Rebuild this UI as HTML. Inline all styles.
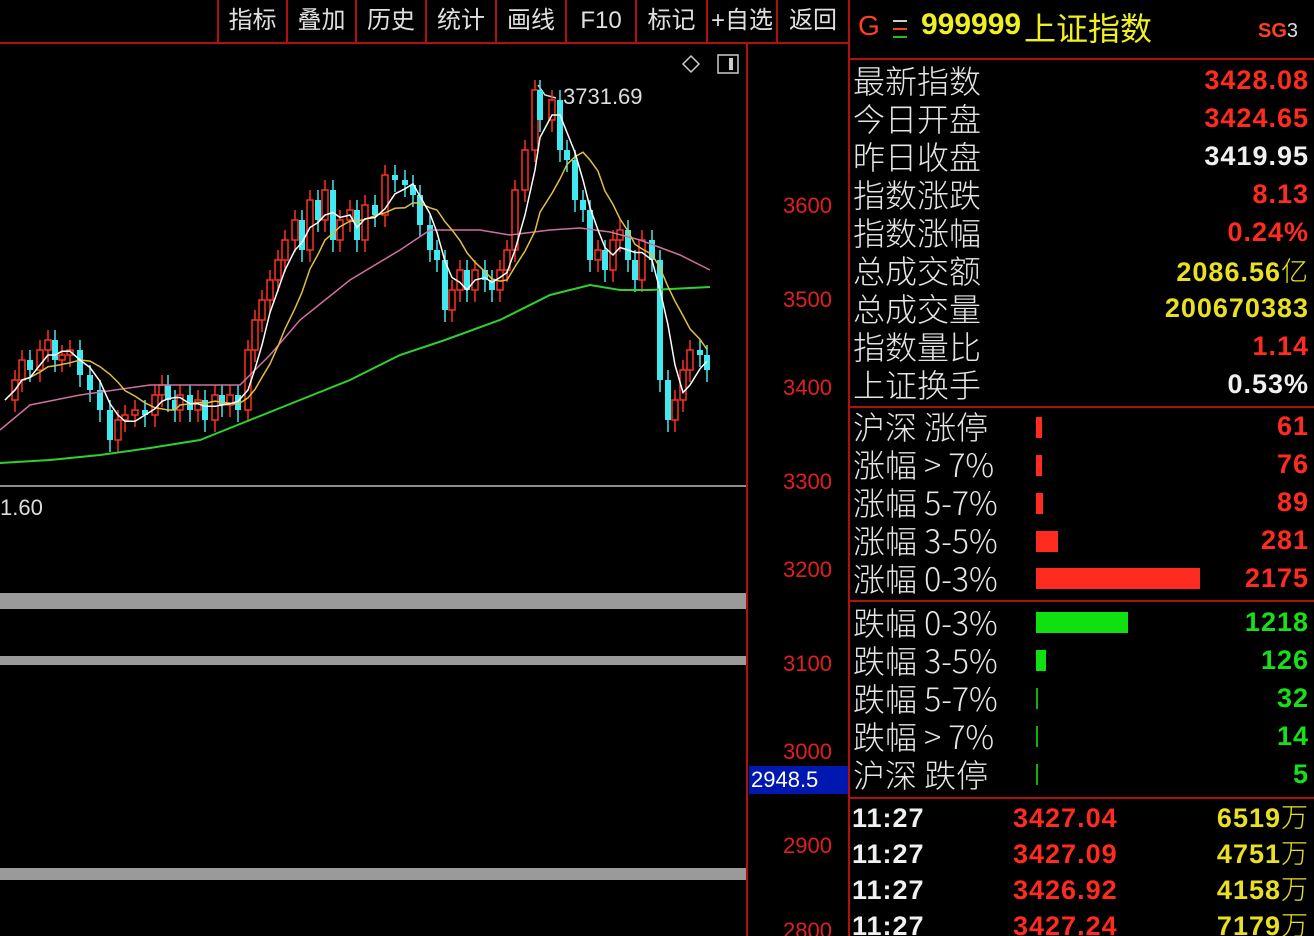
<!DOCTYPE html>
<html style="overflow:hidden;height:936px"><head><meta charset="utf-8"><style>
html,body{margin:0;}
body{width:1314px;height:936px;background:#000;overflow:hidden;position:relative;font-family:"Liberation Sans","Noto Sans CJK SC",sans-serif;}
.a{position:absolute;white-space:nowrap;}
.tb{position:absolute;top:0;height:42px;line-height:42px;text-align:center;color:#e0e0e0;font-size:24px;border-left:2px solid #b01010;}
.lab{position:absolute;left:853px;color:#e6e6e6;font-size:32px;line-height:38px;height:38px;font-family:"Noto Sans CJK SC",sans-serif;font-weight:300;}
.val{position:absolute;right:5px;font-size:27px;font-weight:bold;line-height:38px;height:38px;letter-spacing:1px;}
.ax{position:absolute;left:783px;color:#e02020;font-size:22px;}
.tr{position:absolute;font-size:27px;font-weight:bold;line-height:32px;height:32px;letter-spacing:1px;}
.r{color:#ff2a20}.g{color:#18e018}.y{color:#e8e020}.w{color:#f0f0f0}
</style></head><body>
<div class="tb" style="left:217px;width:67px">指标</div>
<div class="tb" style="left:286px;width:67px">叠加</div>
<div class="tb" style="left:355px;width:68px">历史</div>
<div class="tb" style="left:425px;width:68px">统计</div>
<div class="tb" style="left:495px;width:68px">画线</div>
<div class="tb" style="left:565px;width:68px">F10</div>
<div class="tb" style="left:635px;width:69px">标记</div>
<div class="tb" style="left:706px;width:68px">+自选</div>
<div class="tb" style="left:776px;width:70px">返回</div>
<div class="a" style="left:0;top:42px;width:850px;height:2px;background:#b01010"></div>
<div class="a" style="left:746px;top:42px;width:2px;height:894px;background:#b01010"></div>
<div class="a" style="left:848px;top:0;width:2px;height:936px;background:#b01010"></div>
<svg class="a" style="left:0;top:0" width="746" height="936" id="ch">
<path d="M691 56 l8 8 l-8 8 l-8 -8z" fill="none" stroke="#ccc" stroke-width="1.5"/>
<rect x="718" y="55" width="20" height="18" fill="none" stroke="#ccc" stroke-width="1.5"/><rect x="729" y="58" width="4" height="12" fill="#ccc"/>
<line x1="0" y1="486" x2="746" y2="486" stroke="#bbb" stroke-width="1.5"/>
<rect x="0" y="593" width="746" height="16" fill="#9a9a9a"/>
<rect x="0" y="656" width="746" height="9" fill="#9a9a9a"/>
<rect x="0" y="868" width="746" height="12" fill="#9a9a9a"/>
<polyline points="538,85 545,95 556,98" fill="none" stroke="#ddd" stroke-width="1.5"/>
<text x="563" y="104" fill="#ddd" font-size="22" font-family="Liberation Sans">3731.69</text>
<text x="0" y="515" fill="#ddd" font-size="22" font-family="Liberation Sans">1.60</text>
<g id="cd"></g>
<polyline fill="none" stroke="#d070a0" stroke-width="1.5" points="0,430 30,405 80,395 150,385 200,385 240,385 270,355 300,320 350,280 400,250 430,230 480,230 510,235 550,230 580,228 610,232 640,240 680,255 710,270"/>
<polyline fill="none" stroke="#30d030" stroke-width="2" points="0,463 50,460 100,455 150,448 200,440 250,420 300,400 350,380 400,355 445,340 500,320 550,295 590,285 620,290 650,290 710,287"/>
<polyline id="m10" fill="none" stroke="#e0c040" stroke-width="1.5"/>
<polyline id="m5" fill="none" stroke="#fff" stroke-width="1.5"/>
</svg>
<div class="ax" style="top:193px">3600</div>
<div class="ax" style="top:287px">3500</div>
<div class="ax" style="top:375px">3400</div>
<div class="ax" style="top:469px">3300</div>
<div class="ax" style="top:557px">3200</div>
<div class="ax" style="top:651px">3100</div>
<div class="ax" style="top:739px">3000</div>
<div class="ax" style="top:833px">2900</div>
<div class="ax" style="top:918px">2800</div>
<div class="a" style="left:749px;top:766px;width:97px;height:28px;background:#0018b0;color:#fff;font-size:22px;line-height:28px;padding-left:2px">2948.5</div>
<div class="a" style="left:858px;top:10px;color:#ff4020;font-size:28px">G</div>
<div class="a" style="left:893px;top:20px;width:14px;height:2px;background:#d0d0d0"></div>
<div class="a" style="left:893px;top:28px;width:14px;height:2px;background:#ff4020"></div>
<div class="a" style="left:893px;top:36px;width:14px;height:2px;background:#20c020"></div>
<div class="a" style="left:921px;top:8px;color:#f0f020;font-size:30px;font-weight:bold">999999</div>
<div class="a" style="left:1024px;top:5px;color:#f0f020;font-size:32px;line-height:44px;font-family:'Noto Sans CJK SC',sans-serif">上证指数</div>
<div class="a" style="left:1258px;top:20px;font-size:20px"><b style="color:#ff4020">SG</b><span style="color:#ddd">3</span></div>
<div class="a" style="left:850px;top:58px;width:464px;height:2px;background:#b01010"></div>
<div class="lab" style="top:61px">最新指数</div><div class="val r" style="top:61px">3428.08</div>
<div class="lab" style="top:99px">今日开盘</div><div class="val r" style="top:99px">3424.65</div>
<div class="lab" style="top:137px">昨日收盘</div><div class="val w" style="top:137px">3419.95</div>
<div class="lab" style="top:175px">指数涨跌</div><div class="val r" style="top:175px">8.13</div>
<div class="lab" style="top:213px">指数涨幅</div><div class="val r" style="top:213px">0.24%</div>
<div class="lab" style="top:251px">总成交额</div><div class="val y" style="top:251px">2086.56<span style="font-weight:300;font-family:'Noto Sans CJK SC'">亿</span></div>
<div class="lab" style="top:289px">总成交量</div><div class="val y" style="top:289px">200670383</div>
<div class="lab" style="top:327px">指数量比</div><div class="val r" style="top:327px">1.14</div>
<div class="lab" style="top:365px">上证换手</div><div class="val w" style="top:365px">0.53%</div>
<div class="a" style="left:850px;top:406px;width:464px;height:2px;background:#b01010"></div>
<div class="lab" style="top:407px">沪深 涨停</div><div class="val r" style="top:407px">61</div>
<div class="lab" style="top:445px">涨幅 &gt; 7%</div><div class="val r" style="top:445px">76</div>
<div class="lab" style="top:483px">涨幅 5-7%</div><div class="val r" style="top:483px">89</div>
<div class="lab" style="top:521px">涨幅 3-5%</div><div class="val r" style="top:521px">281</div>
<div class="lab" style="top:559px">涨幅 0-3%</div><div class="val r" style="top:559px">2175</div>
<div class="a" style="left:1036px;top:417px;width:6px;height:21px;background:#ff2a20"></div>
<div class="a" style="left:1036px;top:455px;width:6px;height:21px;background:#ff2a20"></div>
<div class="a" style="left:1036px;top:493px;width:7px;height:21px;background:#ff2a20"></div>
<div class="a" style="left:1036px;top:531px;width:22px;height:21px;background:#ff2a20"></div>
<div class="a" style="left:1036px;top:568px;width:164px;height:21px;background:#ff2a20"></div>
<div class="a" style="left:850px;top:600px;width:464px;height:2px;background:#b01010"></div>
<div class="lab" style="top:603px">跌幅 0-3%</div><div class="val g" style="top:603px">1218</div>
<div class="lab" style="top:641px">跌幅 3-5%</div><div class="val g" style="top:641px">126</div>
<div class="lab" style="top:679px">跌幅 5-7%</div><div class="val g" style="top:679px">32</div>
<div class="lab" style="top:717px">跌幅 &gt; 7%</div><div class="val g" style="top:717px">14</div>
<div class="lab" style="top:755px">沪深 跌停</div><div class="val g" style="top:755px">5</div>
<div class="a" style="left:1036px;top:612px;width:92px;height:21px;background:#10e010"></div>
<div class="a" style="left:1036px;top:650px;width:10px;height:21px;background:#10e010"></div>
<div class="a" style="left:1036px;top:688px;width:2px;height:21px;background:#10b010"></div>
<div class="a" style="left:1036px;top:726px;width:2px;height:21px;background:#10b010"></div>
<div class="a" style="left:1036px;top:764px;width:2px;height:21px;background:#10b010"></div>
<div class="a" style="left:850px;top:797px;width:464px;height:2px;background:#b01010"></div>
<div class="tr w" style="left:852px;top:802px">11:27</div><div class="tr r" style="left:1013px;top:802px">3427.04</div><div class="tr y" style="right:5px;top:802px">6519<span style="font-weight:300">万</span></div>
<div class="tr w" style="left:852px;top:838px">11:27</div><div class="tr r" style="left:1013px;top:838px">3427.09</div><div class="tr y" style="right:5px;top:838px">4751<span style="font-weight:300">万</span></div>
<div class="tr w" style="left:852px;top:874px">11:27</div><div class="tr r" style="left:1013px;top:874px">3426.92</div><div class="tr y" style="right:5px;top:874px">4158<span style="font-weight:300">万</span></div>
<div class="tr w" style="left:852px;top:910px">11:27</div><div class="tr r" style="left:1013px;top:910px">3427.24</div><div class="tr y" style="right:5px;top:910px">7179<span style="font-weight:300">万</span></div>
<script>
var d=[[5,400],[15,380],[22,360],[30,370],[40,350],[48,340],[55,360],[62,355],[70,350],[80,375],[90,390],[100,410],[110,440],[118,420],[125,415],[135,410],[145,415],[155,395],[162,385],[168,400],[175,410],[180,395],[190,410],[198,400],[205,420],[215,395],[222,405],[230,395],[238,410],[248,350],[255,320],[262,300],[270,280],[278,260],[285,240],[295,220],[302,250],[310,200],[318,220],[325,190],[333,240],[340,220],[350,210],[357,240],[365,205],[375,215],[385,175],[395,180],[405,185],[413,195],[420,225],[430,250],[437,260],[445,310],[452,290],[460,270],[467,290],[475,270],[485,280],[492,290],[500,270],[507,250],[515,190],[525,150],[535,90],[540,120],[552,100],[560,150],[567,160],[575,200],[583,210],[590,260],[598,250],[605,270],[613,240],[620,230],[628,260],[635,280],[642,240],[652,260],[660,380],[668,420],[675,400],[683,370],[690,350],[700,355],[707,370]];
var s='';
for(var i=1;i<d.length;i++){var x=d[i][0],o=d[i-1][1],c=d[i][1],up=c<o,t=Math.min(o,c),b=Math.max(o,c);if(b-t<3)b=t+3;
var col=up?'#ff3020':'#40e8f0';
s+='<line x1="'+x+'" y1="'+(t-10)+'" x2="'+x+'" y2="'+(b+12)+'" stroke="'+col+'" stroke-width="1.5"/>';
s+=up?'<rect x="'+(x-3)+'" y="'+t+'" width="6" height="'+(b-t)+'" fill="#000" stroke="'+col+'" stroke-width="1.5"/>':'<rect x="'+(x-3)+'" y="'+t+'" width="6" height="'+(b-t)+'" fill="'+col+'"/>';}
document.getElementById('cd').innerHTML=s;
function ma(n){var p=[];for(var i=0;i<d.length;i++){var a=0,k=0;for(var j=Math.max(0,i-n+1);j<=i;j++){a+=d[j][1];k++;}p.push(d[i][0]+','+(a/k).toFixed(1));}return p.join(' ');}
document.getElementById('m5').setAttribute('points',ma(4));
document.getElementById('m10').setAttribute('points',ma(9));
</script>
</body></html>
